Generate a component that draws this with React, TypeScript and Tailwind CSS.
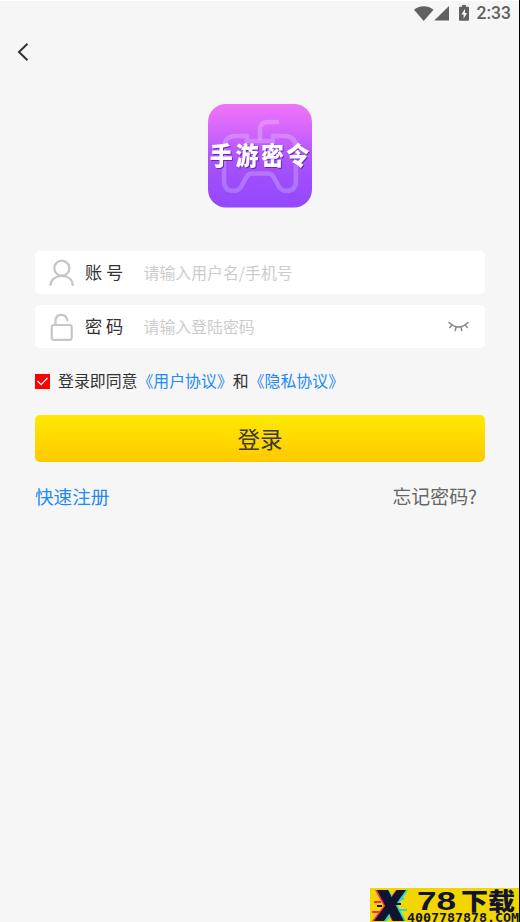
import { useState, type ReactNode } from 'react';

interface FieldProps {
  icon: ReactNode;
  label: string;
  placeholder: string;
  type?: string;
  trailing?: ReactNode;
}

function StatusBar() {
  return (
    <div className="flex h-[26px] shrink-0 items-center justify-end border-t border-white pr-2 text-[#616161]">
      <svg width="20" height="16" viewBox="0 0 20 16" fill="currentColor">
        <path d="M0 3.700C6-.8 13.500-.8 19.500 3.700L9.700 15Z" />
      </svg>
      <svg width="16" height="16" viewBox="0 0 16 16" fill="currentColor">
        <path d="M15 0V14.500H.3Z" />
      </svg>
      <svg className="ml-[9px]" width="11" height="17" viewBox="0 0 11 17">
        <path d="M3 0h4v1.700h2q1 0 1 1v12q0 1-1 1H1q-1 0-1-1v-12q0-1 1-1h2z" fill="currentColor" />
        <path d="M6 3.800 2.400 9.500h2.200v4.200L8 8H6z" fill="#f6f6f6" />
      </svg>
      <span className="ml-[7px] font-['Roboto',sans-serif] text-[17.500px] font-medium leading-none">2:33</span>
    </div>
  );
}

function AppLogo() {
  return (
    <svg className="mx-auto block" width="104" height="104" viewBox="0 0 104 104">
      <defs>
        <linearGradient id="logo-bg" x1="0" y1="0" x2="0" y2="1">
          <stop offset="0" stopColor="#f073fa" />
          <stop offset=".18" stopColor="#dc6bfb" />
          <stop offset=".6" stopColor="#a550fb" />
          <stop offset="1" stopColor="#9348ff" />
        </linearGradient>
      </defs>
      <rect width="104" height="103.500" rx="18" fill="url(#logo-bg)" />
      <g fill="none" stroke="#fff" strokeOpacity=".22" strokeWidth="4.500" strokeLinecap="round" strokeLinejoin="round">
        <path d="M52 34v-8q0-8 8-8h9" />
        <path d="M39 32H28q-12 0-12 12v33q0 10 10 10 5 0 8-6l5-9q1.500-2.500 5-2.500h16q3.500 0 5 2.500l5 9q3 6 8 6 10 0 10-10V44q0-12-12-12H65v5H39z" />
      </g>
      <g
        className="drop-shadow-[1px_1px_0_#6b25bd]"
        fontFamily="'Noto Sans CJK SC', sans-serif"
        fontSize="25"
        fontWeight="900"
        fill="#fff"
        transform="scale(.92 1)"
      >
        <text x="2 30 57.500 85" y="61.500">手游密令</text>
      </g>
    </svg>
  );
}

function UserIcon() {
  return (
    <svg width="26" height="28" viewBox="0 0 26 28" fill="none" stroke="#c5c5ca" strokeWidth="2.200" strokeLinecap="round">
      <circle cx="12.800" cy="9.200" r="7.500" />
      <path d="M1.500 26C2 20.500 6.500 16.900 12.800 16.900S23.200 20.500 23.700 26" />
    </svg>
  );
}

function LockIcon() {
  return (
    <svg width="26" height="28" viewBox="0 0 26 28" fill="none" stroke="#c5c5ca" strokeWidth="2.200" strokeLinecap="round">
      <rect x="2.700" y="12" width="20" height="14.800" rx="2" />
      <path d="M6.500 11.500V7.800q0-6 6-6 4.800 0 5.800 5.500" />
    </svg>
  );
}

function ClosedEyeIcon() {
  return (
    <svg width="21" height="11" viewBox="0 0 21 11" fill="none" stroke="#888" strokeWidth="1.500" strokeLinecap="round">
      <path d="M1 1.500Q10.500 10.500 20 1.500M4 4 1.800 6.500M8 6 7.300 9.600M13 6l.7 3.600M17 4l2.200 2.500" />
    </svg>
  );
}

function Field({ icon, label, placeholder, type = 'text', trailing }: FieldProps) {
  return (
    <label className="flex h-[43px] items-center rounded-[5px] bg-white pl-3.5 pr-4">
      {icon}
      <span className="mb-0.5 ml-2.5 w-[58.500px] shrink-0 whitespace-pre text-[17.200px] text-[#333]">{label}</span>
      <input
        type={type}
        placeholder={placeholder}
        className="h-full min-w-0 flex-1 bg-transparent text-[15.900px] text-[#333] outline-none placeholder:text-[#ccc]"
      />
      {trailing}
    </label>
  );
}

function Watermark() {
  return (
    <svg className="block" width="150" height="34" viewBox="0 0 150 34">
      <rect width="150" height="34" fill="#f3d600" />
      <path d="M5 2h11l16 31H22zM26 2h8L14 33H2zM4 13h7v2H4zM2 23h9v2H2z" fill="#ff2b62" />
      <path d="M9 2h10l17 31H27zM29 2h9L17 33H8zM27 10h7v2h-7zM27 21h10v2H27z" fill="#16dce0" />
      <path d="M7 2h11l16 31H23zM27 2h9L14 33H4zM7 17h5v2H7zM25 15h6v2h-6z" fill="#10142d" />
      <g fill="#10142d">
        <text x="47" y="22" fontFamily="'Liberation Sans', sans-serif" fontSize="26" fontWeight="700" textLength="39" lengthAdjust="spacingAndGlyphs">78</text>
        <text x="91" y="22" fontFamily="'Noto Sans CJK SC', sans-serif" fontSize="23.500" fontWeight="900" textLength="54" lengthAdjust="spacingAndGlyphs">下载</text>
        <text x="37" y="33.500" fontFamily="'DejaVu Sans Mono', monospace" fontSize="12.500" fontWeight="700" textLength="112" lengthAdjust="spacingAndGlyphs">4007787878.COM</text>
      </g>
    </svg>
  );
}

export default function App() {
  const [agreed, setAgreed] = useState(true);

  return (
    <div className="relative flex h-[922px] w-[520px] flex-col overflow-hidden border-r border-black bg-[#f6f6f6] font-['Noto_Sans_CJK_SC',sans-serif]">
      <StatusBar />
      <header className="flex h-[52px] shrink-0 items-center pl-4">
        <button aria-label="返回">
          <svg width="14" height="20" viewBox="0 0 14 20" fill="none" stroke="#333" strokeWidth="2">
            <path d="M11.500 1.800 3 10l8.500 8.200" />
          </svg>
        </button>
      </header>

      <main className="pl-[35px] pr-[34px] pt-[26px]">
        <AppLogo />

        <div className="mt-[43px] flex flex-col gap-[11px]">
          <Field icon={<UserIcon />} label="账 号" placeholder="请输入用户名/手机号" />
          <Field icon={<LockIcon />} label="密 码" placeholder="请输入登陆密码" type="password" trailing={<ClosedEyeIcon />} />
        </div>

        <div className="mt-[21px] flex h-6 items-center text-[15.900px] text-[#333]">
          <button
            role="checkbox"
            aria-checked={agreed}
            aria-label="同意"
            onClick={() => setAgreed(!agreed)}
            className="mr-2 flex size-[15px] items-center justify-center bg-[#f00]"
          >
            {agreed && (
              <svg width="13" height="11" viewBox="0 0 13 11" fill="none" stroke="#fff" strokeWidth="1.300">
                <path d="m1.500 5 3.600 3.600L11.500 2" />
              </svg>
            )}
          </button>
          <span>登录即同意</span>
          <a className="text-[#2489f8]">《用户协议》</a>
          <span>和</span>
          <a className="text-[#2489f8]">《隐私协议》</a>
        </div>

        <button className="mt-[22px] flex h-[47px] w-full items-center justify-center rounded-[5px] bg-linear-to-b from-[#ffe900] to-[#ffc900] text-[22.500px] text-[#3b3a2c]">
          登录
        </button>

        <div className="mt-5 flex items-center justify-between pr-2 text-[18.600px] leading-7">
          <a className="text-[#2489f8]">快速注册</a>
          <a className="text-[18.900px] text-[#666]">忘记密码?</a>
        </div>
      </main>

      <div className="absolute -right-px bottom-0">
        <Watermark />
      </div>
    </div>
  );
}
